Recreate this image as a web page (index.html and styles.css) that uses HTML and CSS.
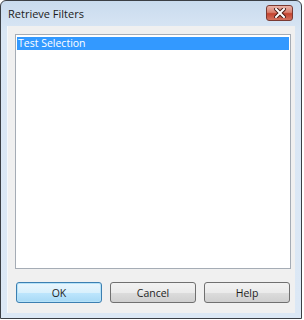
FILE: index.html
```html
<!DOCTYPE html>
<html lang="en">
<head>
    <meta charset="UTF-8">
    <title>Retrieve Filters</title>
    <link rel="stylesheet" href="styles.css">
</head>
<body>
    <div class="window">
        <div class="titlebar">
            <span class="title">Retrieve Filters</span>
            <button class="close" type="button" aria-label="Close">
                <svg width="12" height="10" viewBox="0 0 12 10">
                    <path d="M2 1 L10 9 M10 1 L2 9" stroke="#4a1c16" stroke-width="4" stroke-linecap="square"/>
                    <path d="M2 1 L10 9 M10 1 L2 9" stroke="#ffffff" stroke-width="2" stroke-linecap="square"/>
                </svg>
            </button>
        </div>

        <div class="client">
            <div class="list">
                <div class="item selected">Test Selection</div>
            </div>
            <div class="buttons">
                <button class="btn default" type="button">OK</button>
                <button class="btn" type="button">Cancel</button>
                <button class="btn" type="button">Help</button>
            </div>
        </div>
    </div>
</body>
</html>
```

FILE: styles.css
```css
body {
    margin: 0;
    padding: 0;
    background: #ffffff;
    font-family: 'Open Sans', 'Liberation Sans', sans-serif;
    font-size: 10.5px;
    color: #1e1e1e;
}
.window {
    width: 300px;
    height: 317px;
    border: 1px solid #3b3f45;
    border-radius: 6px 6px 0 0;
    background: linear-gradient(#c9dbee, #d9e6f4 30px, #dce8f5);
    display: flex;
    flex-direction: column;
}
.titlebar {
    height: 25px;
    display: flex;
    align-items: center;
    justify-content: space-between;
    padding: 0 8px 0 7px;
}
.title {
    font-size: 11px;
    color: #1b1b1b;
}
.close {
    width: 27px;
    height: 16px;
    margin-top: -2px;
    padding: 0;
    border: 1px solid #7a3a32;
    border-radius: 3px;
    background: linear-gradient(#eab3a8, #d9806f 45%, #c4432f 55%, #d2725f);
    display: flex;
    align-items: center;
    justify-content: center;
}
.client {
    flex: 1;
    margin: 0 6px 5px 6px;
    background: #f0f0f0;
    border-left: 1px solid #f4f8fc;
    display: flex;
    flex-direction: column;
    padding: 8px 4px 0 7px;
}
.list {
    height: 229px;
    border: 1px solid #a5acb5;
    background: #ffffff;
    padding: 2px 1px;
}
.item {
    height: 13px;
    line-height: 13px;
    padding-left: 1px;
}
.selected {
    background: #3399ff;
    color: #ffffff;
}
.buttons {
    display: flex;
    gap: 8px;
    margin-top: 13px;
    padding-left: 1px;
}
.btn {
    width: 86px;
    height: 21px;
    padding: 0;
    font-family: 'Open Sans', 'Liberation Sans', sans-serif;
    font-size: 10.5px;
    color: #1e1e1e;
    border: 1px solid #707070;
    border-radius: 3px;
    background: linear-gradient(#f2f2f2, #ebebeb 50%, #dddddd 50%, #cfcfcf);
}
.default {
    border-color: #3c7fb1;
    box-shadow: inset 0 0 0 1px #b6e2f8;
    background: linear-gradient(#eaf6fd, #d9f0fc 50%, #bee6fd 50%, #a7d9f5);
}
```
